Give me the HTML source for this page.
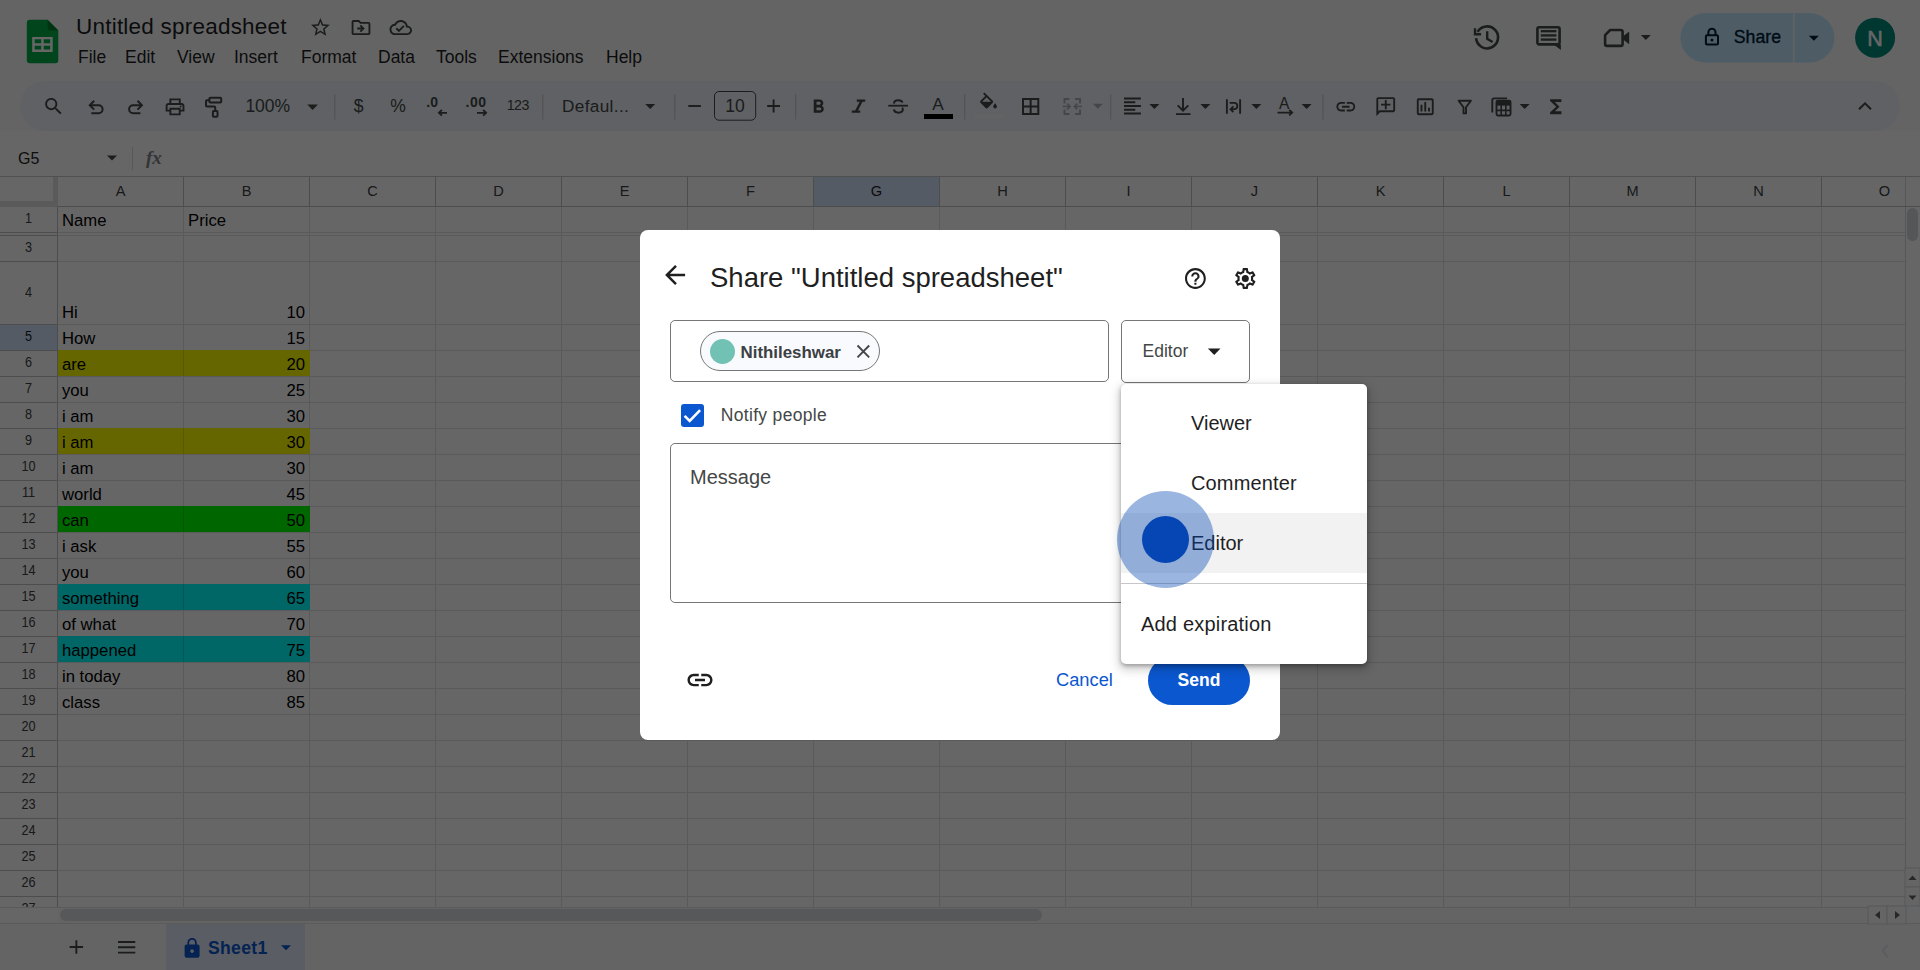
<!DOCTYPE html>
<html lang="en"><head><meta charset="utf-8"><title>Untitled spreadsheet - Google Sheets</title>
<style>
html,body{margin:0;padding:0;}
body{width:1920px;height:970px;overflow:hidden;position:relative;background:#f9fbfd;font-family:"Liberation Sans",sans-serif;}
.b{position:absolute;box-sizing:border-box;display:block;}
.t{position:absolute;white-space:nowrap;line-height:1;font-family:"Liberation Sans",sans-serif;}
#app,#overlay,#modal{position:absolute;left:0;top:0;width:1920px;height:970px;overflow:hidden;}
#overlay{background:rgba(0,0,0,0.6);}
</style></head><body>
<div id="app">
<!-- header -->
<div class="t " style="left:76px;top:16px;font-size:22.5px;color:#1f1f1f;letter-spacing:0.22px;">Untitled spreadsheet</div>
<div class="t " style="left:78px;top:49px;font-size:17.5px;color:#1f1f1f;">File</div>
<div class="t " style="left:125px;top:49px;font-size:17.5px;color:#1f1f1f;">Edit</div>
<div class="t " style="left:177px;top:49px;font-size:17.5px;color:#1f1f1f;">View</div>
<div class="t " style="left:234px;top:49px;font-size:17.5px;color:#1f1f1f;">Insert</div>
<div class="t " style="left:301px;top:49px;font-size:17.5px;color:#1f1f1f;">Format</div>
<div class="t " style="left:378px;top:49px;font-size:17.5px;color:#1f1f1f;">Data</div>
<div class="t " style="left:436px;top:49px;font-size:17.5px;color:#1f1f1f;">Tools</div>
<div class="t " style="left:498px;top:49px;font-size:17.5px;color:#1f1f1f;">Extensions</div>
<div class="t " style="left:606px;top:49px;font-size:17.5px;color:#1f1f1f;">Help</div>
<!-- toolbar -->
<div class="b" style="left:20px;top:81px;width:1880px;height:50px;background:#edf2fa;border-radius:25px;"></div>
<div class="b" style="left:0px;top:131px;width:1920px;height:46px;background:#ffffff;"></div>
<div class="b" style="left:0px;top:176px;width:1920px;height:1px;background:#c7c7c7;"></div>
<div class="t " style="left:18px;top:151px;font-size:16.0px;color:#1f1f1f;">G5</div>
<div class="b" style="left:132px;top:147px;width:1px;height:23px;background:#dadce0;"></div>
<!-- grid -->
<div class="b" style="left:0px;top:177px;width:1905px;height:730px;background:#ffffff;"></div>
<div class="b" style="left:814px;top:177px;width:125px;height:29px;background:#d3e3fd;"></div>
<div class="b" style="left:0px;top:325px;width:57px;height:25px;background:#d3e3fd;"></div>
<div class="b" style="left:0px;top:206px;width:1905px;height:1px;background:#e1e1e1;"></div>
<div class="b" style="left:0px;top:232px;width:1905px;height:1px;background:#e1e1e1;"></div>
<div class="b" style="left:0px;top:235px;width:1905px;height:1px;background:#e1e1e1;"></div>
<div class="b" style="left:0px;top:261px;width:1905px;height:1px;background:#e1e1e1;"></div>
<div class="b" style="left:0px;top:324px;width:1905px;height:1px;background:#e1e1e1;"></div>
<div class="b" style="left:0px;top:350px;width:1905px;height:1px;background:#e1e1e1;"></div>
<div class="b" style="left:0px;top:376px;width:1905px;height:1px;background:#e1e1e1;"></div>
<div class="b" style="left:0px;top:402px;width:1905px;height:1px;background:#e1e1e1;"></div>
<div class="b" style="left:0px;top:428px;width:1905px;height:1px;background:#e1e1e1;"></div>
<div class="b" style="left:0px;top:454px;width:1905px;height:1px;background:#e1e1e1;"></div>
<div class="b" style="left:0px;top:480px;width:1905px;height:1px;background:#e1e1e1;"></div>
<div class="b" style="left:0px;top:506px;width:1905px;height:1px;background:#e1e1e1;"></div>
<div class="b" style="left:0px;top:532px;width:1905px;height:1px;background:#e1e1e1;"></div>
<div class="b" style="left:0px;top:558px;width:1905px;height:1px;background:#e1e1e1;"></div>
<div class="b" style="left:0px;top:584px;width:1905px;height:1px;background:#e1e1e1;"></div>
<div class="b" style="left:0px;top:610px;width:1905px;height:1px;background:#e1e1e1;"></div>
<div class="b" style="left:0px;top:636px;width:1905px;height:1px;background:#e1e1e1;"></div>
<div class="b" style="left:0px;top:662px;width:1905px;height:1px;background:#e1e1e1;"></div>
<div class="b" style="left:0px;top:688px;width:1905px;height:1px;background:#e1e1e1;"></div>
<div class="b" style="left:0px;top:714px;width:1905px;height:1px;background:#e1e1e1;"></div>
<div class="b" style="left:0px;top:740px;width:1905px;height:1px;background:#e1e1e1;"></div>
<div class="b" style="left:0px;top:766px;width:1905px;height:1px;background:#e1e1e1;"></div>
<div class="b" style="left:0px;top:792px;width:1905px;height:1px;background:#e1e1e1;"></div>
<div class="b" style="left:0px;top:818px;width:1905px;height:1px;background:#e1e1e1;"></div>
<div class="b" style="left:0px;top:844px;width:1905px;height:1px;background:#e1e1e1;"></div>
<div class="b" style="left:0px;top:870px;width:1905px;height:1px;background:#e1e1e1;"></div>
<div class="b" style="left:0px;top:896px;width:1905px;height:1px;background:#e1e1e1;"></div>
<div class="b" style="left:0px;top:206px;width:58px;height:1px;background:#c0c0c0;"></div>
<div class="b" style="left:0px;top:232px;width:58px;height:1px;background:#c0c0c0;"></div>
<div class="b" style="left:0px;top:235px;width:58px;height:1px;background:#c0c0c0;"></div>
<div class="b" style="left:0px;top:261px;width:58px;height:1px;background:#c0c0c0;"></div>
<div class="b" style="left:0px;top:324px;width:58px;height:1px;background:#c0c0c0;"></div>
<div class="b" style="left:0px;top:350px;width:58px;height:1px;background:#c0c0c0;"></div>
<div class="b" style="left:0px;top:376px;width:58px;height:1px;background:#c0c0c0;"></div>
<div class="b" style="left:0px;top:402px;width:58px;height:1px;background:#c0c0c0;"></div>
<div class="b" style="left:0px;top:428px;width:58px;height:1px;background:#c0c0c0;"></div>
<div class="b" style="left:0px;top:454px;width:58px;height:1px;background:#c0c0c0;"></div>
<div class="b" style="left:0px;top:480px;width:58px;height:1px;background:#c0c0c0;"></div>
<div class="b" style="left:0px;top:506px;width:58px;height:1px;background:#c0c0c0;"></div>
<div class="b" style="left:0px;top:532px;width:58px;height:1px;background:#c0c0c0;"></div>
<div class="b" style="left:0px;top:558px;width:58px;height:1px;background:#c0c0c0;"></div>
<div class="b" style="left:0px;top:584px;width:58px;height:1px;background:#c0c0c0;"></div>
<div class="b" style="left:0px;top:610px;width:58px;height:1px;background:#c0c0c0;"></div>
<div class="b" style="left:0px;top:636px;width:58px;height:1px;background:#c0c0c0;"></div>
<div class="b" style="left:0px;top:662px;width:58px;height:1px;background:#c0c0c0;"></div>
<div class="b" style="left:0px;top:688px;width:58px;height:1px;background:#c0c0c0;"></div>
<div class="b" style="left:0px;top:714px;width:58px;height:1px;background:#c0c0c0;"></div>
<div class="b" style="left:0px;top:740px;width:58px;height:1px;background:#c0c0c0;"></div>
<div class="b" style="left:0px;top:766px;width:58px;height:1px;background:#c0c0c0;"></div>
<div class="b" style="left:0px;top:792px;width:58px;height:1px;background:#c0c0c0;"></div>
<div class="b" style="left:0px;top:818px;width:58px;height:1px;background:#c0c0c0;"></div>
<div class="b" style="left:0px;top:844px;width:58px;height:1px;background:#c0c0c0;"></div>
<div class="b" style="left:0px;top:870px;width:58px;height:1px;background:#c0c0c0;"></div>
<div class="b" style="left:0px;top:896px;width:58px;height:1px;background:#c0c0c0;"></div>
<div class="b" style="left:0px;top:206px;width:1905px;height:1px;background:#c0c0c0;"></div>
<div class="b" style="left:57px;top:207px;width:1px;height:700px;background:#e1e1e1;"></div>
<div class="b" style="left:57px;top:177px;width:1px;height:30px;background:#c0c0c0;"></div>
<div class="b" style="left:183px;top:207px;width:1px;height:700px;background:#e1e1e1;"></div>
<div class="b" style="left:183px;top:177px;width:1px;height:30px;background:#c0c0c0;"></div>
<div class="b" style="left:309px;top:207px;width:1px;height:700px;background:#e1e1e1;"></div>
<div class="b" style="left:309px;top:177px;width:1px;height:30px;background:#c0c0c0;"></div>
<div class="b" style="left:435px;top:207px;width:1px;height:700px;background:#e1e1e1;"></div>
<div class="b" style="left:435px;top:177px;width:1px;height:30px;background:#c0c0c0;"></div>
<div class="b" style="left:561px;top:207px;width:1px;height:700px;background:#e1e1e1;"></div>
<div class="b" style="left:561px;top:177px;width:1px;height:30px;background:#c0c0c0;"></div>
<div class="b" style="left:687px;top:207px;width:1px;height:700px;background:#e1e1e1;"></div>
<div class="b" style="left:687px;top:177px;width:1px;height:30px;background:#c0c0c0;"></div>
<div class="b" style="left:813px;top:207px;width:1px;height:700px;background:#e1e1e1;"></div>
<div class="b" style="left:813px;top:177px;width:1px;height:30px;background:#c0c0c0;"></div>
<div class="b" style="left:939px;top:207px;width:1px;height:700px;background:#e1e1e1;"></div>
<div class="b" style="left:939px;top:177px;width:1px;height:30px;background:#c0c0c0;"></div>
<div class="b" style="left:1065px;top:207px;width:1px;height:700px;background:#e1e1e1;"></div>
<div class="b" style="left:1065px;top:177px;width:1px;height:30px;background:#c0c0c0;"></div>
<div class="b" style="left:1191px;top:207px;width:1px;height:700px;background:#e1e1e1;"></div>
<div class="b" style="left:1191px;top:177px;width:1px;height:30px;background:#c0c0c0;"></div>
<div class="b" style="left:1317px;top:207px;width:1px;height:700px;background:#e1e1e1;"></div>
<div class="b" style="left:1317px;top:177px;width:1px;height:30px;background:#c0c0c0;"></div>
<div class="b" style="left:1443px;top:207px;width:1px;height:700px;background:#e1e1e1;"></div>
<div class="b" style="left:1443px;top:177px;width:1px;height:30px;background:#c0c0c0;"></div>
<div class="b" style="left:1569px;top:207px;width:1px;height:700px;background:#e1e1e1;"></div>
<div class="b" style="left:1569px;top:177px;width:1px;height:30px;background:#c0c0c0;"></div>
<div class="b" style="left:1695px;top:207px;width:1px;height:700px;background:#e1e1e1;"></div>
<div class="b" style="left:1695px;top:177px;width:1px;height:30px;background:#c0c0c0;"></div>
<div class="b" style="left:1821px;top:207px;width:1px;height:700px;background:#e1e1e1;"></div>
<div class="b" style="left:1821px;top:177px;width:1px;height:30px;background:#c0c0c0;"></div>
<div class="b" style="left:57px;top:207px;width:1px;height:700px;background:#c0c0c0;"></div>
<div class="b" style="left:58px;top:350px;width:252px;height:26px;background:#ffff00;"></div>
<div class="b" style="left:183px;top:350px;width:1px;height:26px;background:rgba(0,0,0,0.13);"></div>
<div class="b" style="left:58px;top:428px;width:252px;height:26px;background:#ffff00;"></div>
<div class="b" style="left:183px;top:428px;width:1px;height:26px;background:rgba(0,0,0,0.13);"></div>
<div class="b" style="left:58px;top:506px;width:252px;height:26px;background:#00ff00;"></div>
<div class="b" style="left:183px;top:506px;width:1px;height:26px;background:rgba(0,0,0,0.13);"></div>
<div class="b" style="left:58px;top:584px;width:252px;height:26px;background:#00ffff;"></div>
<div class="b" style="left:183px;top:584px;width:1px;height:26px;background:rgba(0,0,0,0.13);"></div>
<div class="b" style="left:58px;top:636px;width:252px;height:26px;background:#00ffff;"></div>
<div class="b" style="left:183px;top:636px;width:1px;height:26px;background:rgba(0,0,0,0.13);"></div>
<div class="b" style="left:53px;top:177px;width:5px;height:30px;background:#e0e0e0;"></div>
<div class="b" style="left:0px;top:201px;width:58px;height:6px;background:#e0e0e0;"></div>
<div class="t " style="left:100.5px;top:184px;font-size:14.6px;color:#3c4043;width:40px;text-align:center;">A</div>
<div class="t " style="left:226.5px;top:184px;font-size:14.6px;color:#3c4043;width:40px;text-align:center;">B</div>
<div class="t " style="left:352.5px;top:184px;font-size:14.6px;color:#3c4043;width:40px;text-align:center;">C</div>
<div class="t " style="left:478.5px;top:184px;font-size:14.6px;color:#3c4043;width:40px;text-align:center;">D</div>
<div class="t " style="left:604.5px;top:184px;font-size:14.6px;color:#3c4043;width:40px;text-align:center;">E</div>
<div class="t " style="left:730.5px;top:184px;font-size:14.6px;color:#3c4043;width:40px;text-align:center;">F</div>
<div class="t " style="left:856.5px;top:184px;font-size:14.6px;color:#1f1f1f;width:40px;text-align:center;">G</div>
<div class="t " style="left:982.5px;top:184px;font-size:14.6px;color:#3c4043;width:40px;text-align:center;">H</div>
<div class="t " style="left:1108.5px;top:184px;font-size:14.6px;color:#3c4043;width:40px;text-align:center;">I</div>
<div class="t " style="left:1234.5px;top:184px;font-size:14.6px;color:#3c4043;width:40px;text-align:center;">J</div>
<div class="t " style="left:1360.5px;top:184px;font-size:14.6px;color:#3c4043;width:40px;text-align:center;">K</div>
<div class="t " style="left:1486.5px;top:184px;font-size:14.6px;color:#3c4043;width:40px;text-align:center;">L</div>
<div class="t " style="left:1612.5px;top:184px;font-size:14.6px;color:#3c4043;width:40px;text-align:center;">M</div>
<div class="t " style="left:1738.5px;top:184px;font-size:14.6px;color:#3c4043;width:40px;text-align:center;">N</div>
<div class="t " style="left:1864.5px;top:184px;font-size:14.6px;color:#3c4043;width:40px;text-align:center;">O</div>
<div class="t " style="left:0px;top:211px;font-size:14.4px;color:#3c4043;width:57px;text-align:center;transform:scaleX(0.88);">1</div>
<div class="t " style="left:0px;top:240px;font-size:14.4px;color:#3c4043;width:57px;text-align:center;transform:scaleX(0.88);">3</div>
<div class="t " style="left:0px;top:285px;font-size:14.4px;color:#3c4043;width:57px;text-align:center;transform:scaleX(0.88);">4</div>
<div class="t " style="left:0px;top:329px;font-size:14.4px;color:#1f1f1f;width:57px;text-align:center;transform:scaleX(0.88);">5</div>
<div class="t " style="left:0px;top:355px;font-size:14.4px;color:#3c4043;width:57px;text-align:center;transform:scaleX(0.88);">6</div>
<div class="t " style="left:0px;top:381px;font-size:14.4px;color:#3c4043;width:57px;text-align:center;transform:scaleX(0.88);">7</div>
<div class="t " style="left:0px;top:407px;font-size:14.4px;color:#3c4043;width:57px;text-align:center;transform:scaleX(0.88);">8</div>
<div class="t " style="left:0px;top:433px;font-size:14.4px;color:#3c4043;width:57px;text-align:center;transform:scaleX(0.88);">9</div>
<div class="t " style="left:0px;top:459px;font-size:14.4px;color:#3c4043;width:57px;text-align:center;transform:scaleX(0.88);">10</div>
<div class="t " style="left:0px;top:485px;font-size:14.4px;color:#3c4043;width:57px;text-align:center;transform:scaleX(0.88);">11</div>
<div class="t " style="left:0px;top:511px;font-size:14.4px;color:#3c4043;width:57px;text-align:center;transform:scaleX(0.88);">12</div>
<div class="t " style="left:0px;top:537px;font-size:14.4px;color:#3c4043;width:57px;text-align:center;transform:scaleX(0.88);">13</div>
<div class="t " style="left:0px;top:563px;font-size:14.4px;color:#3c4043;width:57px;text-align:center;transform:scaleX(0.88);">14</div>
<div class="t " style="left:0px;top:589px;font-size:14.4px;color:#3c4043;width:57px;text-align:center;transform:scaleX(0.88);">15</div>
<div class="t " style="left:0px;top:615px;font-size:14.4px;color:#3c4043;width:57px;text-align:center;transform:scaleX(0.88);">16</div>
<div class="t " style="left:0px;top:641px;font-size:14.4px;color:#3c4043;width:57px;text-align:center;transform:scaleX(0.88);">17</div>
<div class="t " style="left:0px;top:667px;font-size:14.4px;color:#3c4043;width:57px;text-align:center;transform:scaleX(0.88);">18</div>
<div class="t " style="left:0px;top:693px;font-size:14.4px;color:#3c4043;width:57px;text-align:center;transform:scaleX(0.88);">19</div>
<div class="t " style="left:0px;top:719px;font-size:14.4px;color:#3c4043;width:57px;text-align:center;transform:scaleX(0.88);">20</div>
<div class="t " style="left:0px;top:745px;font-size:14.4px;color:#3c4043;width:57px;text-align:center;transform:scaleX(0.88);">21</div>
<div class="t " style="left:0px;top:771px;font-size:14.4px;color:#3c4043;width:57px;text-align:center;transform:scaleX(0.88);">22</div>
<div class="t " style="left:0px;top:797px;font-size:14.4px;color:#3c4043;width:57px;text-align:center;transform:scaleX(0.88);">23</div>
<div class="t " style="left:0px;top:823px;font-size:14.4px;color:#3c4043;width:57px;text-align:center;transform:scaleX(0.88);">24</div>
<div class="t " style="left:0px;top:849px;font-size:14.4px;color:#3c4043;width:57px;text-align:center;transform:scaleX(0.88);">25</div>
<div class="t " style="left:0px;top:875px;font-size:14.4px;color:#3c4043;width:57px;text-align:center;transform:scaleX(0.88);">26</div>
<div class="t " style="left:0px;top:901px;font-size:14.4px;color:#3c4043;width:57px;text-align:center;transform:scaleX(0.88);">27</div>
<div class="t " style="left:62px;top:213px;font-size:16.7px;color:#000000;">Name</div>
<div class="t " style="left:188px;top:213px;font-size:16.7px;color:#000000;">Price</div>
<div class="t " style="left:62px;top:305px;font-size:16.7px;color:#000000;">Hi</div>
<div class="t " style="left:184px;top:305px;font-size:16.7px;color:#000000;width:121px;text-align:right;">10</div>
<div class="t " style="left:62px;top:331px;font-size:16.7px;color:#000000;">How</div>
<div class="t " style="left:184px;top:331px;font-size:16.7px;color:#000000;width:121px;text-align:right;">15</div>
<div class="t " style="left:62px;top:357px;font-size:16.7px;color:#000000;">are</div>
<div class="t " style="left:184px;top:357px;font-size:16.7px;color:#000000;width:121px;text-align:right;">20</div>
<div class="t " style="left:62px;top:383px;font-size:16.7px;color:#000000;">you</div>
<div class="t " style="left:184px;top:383px;font-size:16.7px;color:#000000;width:121px;text-align:right;">25</div>
<div class="t " style="left:62px;top:409px;font-size:16.7px;color:#000000;">i am</div>
<div class="t " style="left:184px;top:409px;font-size:16.7px;color:#000000;width:121px;text-align:right;">30</div>
<div class="t " style="left:62px;top:435px;font-size:16.7px;color:#000000;">i am</div>
<div class="t " style="left:184px;top:435px;font-size:16.7px;color:#000000;width:121px;text-align:right;">30</div>
<div class="t " style="left:62px;top:461px;font-size:16.7px;color:#000000;">i am</div>
<div class="t " style="left:184px;top:461px;font-size:16.7px;color:#000000;width:121px;text-align:right;">30</div>
<div class="t " style="left:62px;top:487px;font-size:16.7px;color:#000000;">world</div>
<div class="t " style="left:184px;top:487px;font-size:16.7px;color:#000000;width:121px;text-align:right;">45</div>
<div class="t " style="left:62px;top:513px;font-size:16.7px;color:#000000;">can</div>
<div class="t " style="left:184px;top:513px;font-size:16.7px;color:#000000;width:121px;text-align:right;">50</div>
<div class="t " style="left:62px;top:539px;font-size:16.7px;color:#000000;">i ask</div>
<div class="t " style="left:184px;top:539px;font-size:16.7px;color:#000000;width:121px;text-align:right;">55</div>
<div class="t " style="left:62px;top:565px;font-size:16.7px;color:#000000;">you</div>
<div class="t " style="left:184px;top:565px;font-size:16.7px;color:#000000;width:121px;text-align:right;">60</div>
<div class="t " style="left:62px;top:591px;font-size:16.7px;color:#000000;">something</div>
<div class="t " style="left:184px;top:591px;font-size:16.7px;color:#000000;width:121px;text-align:right;">65</div>
<div class="t " style="left:62px;top:617px;font-size:16.7px;color:#000000;">of what</div>
<div class="t " style="left:184px;top:617px;font-size:16.7px;color:#000000;width:121px;text-align:right;">70</div>
<div class="t " style="left:62px;top:643px;font-size:16.7px;color:#000000;">happened</div>
<div class="t " style="left:184px;top:643px;font-size:16.7px;color:#000000;width:121px;text-align:right;">75</div>
<div class="t " style="left:62px;top:669px;font-size:16.7px;color:#000000;">in today</div>
<div class="t " style="left:184px;top:669px;font-size:16.7px;color:#000000;width:121px;text-align:right;">80</div>
<div class="t " style="left:62px;top:695px;font-size:16.7px;color:#000000;">class</div>
<div class="t " style="left:184px;top:695px;font-size:16.7px;color:#000000;width:121px;text-align:right;">85</div>
<div class="b" style="left:0px;top:907px;width:1920px;height:17px;background:#f9fbfd;"></div>
<div class="b" style="left:0px;top:907px;width:58px;height:17px;background:#ffffff;"></div>
<div class="b" style="left:0px;top:907px;width:1920px;height:1px;background:#e1e1e1;"></div>
<div class="b" style="left:1905px;top:177px;width:15px;height:747px;background:#ffffff;"></div>
<div class="b" style="left:1905px;top:177px;width:1px;height:730px;background:#d9d9d9;"></div>
<div class="b" style="left:1905px;top:206px;width:15px;height:1px;background:#c0c0c0;"></div>
<div class="b" style="left:1907.3px;top:208px;width:11px;height:32.7px;background:#d5d8dc;border-radius:5.5px;"></div>
<div class="b" style="left:60px;top:909px;width:982px;height:12px;background:#dadce0;border-radius:6px;"></div>
<div class="b" style="left:0px;top:924px;width:1920px;height:46px;background:#f9fbfd;"></div>
<div class="b" style="left:0px;top:923px;width:1920px;height:1px;background:#e1e1e1;"></div>
<div class="b" style="left:166px;top:924px;width:139px;height:46px;background:#e1e9f7;"></div>
<div class="t " style="left:208px;top:940px;font-size:17.6px;color:#0b57d0;font-weight:bold;letter-spacing:0.3px;">Sheet1</div>
<svg class="b" style="left:0;top:0" width="1920" height="970" viewBox="0 0 1920 970"><path d="M29.8 19.7H47.6L58.3 30.4V60.2a3 3 0 0 1-3 3H29.8a3 3 0 0 1-3-3V22.7a3 3 0 0 1 3-3z" fill="#00ac47"/>
<path d="M47.6 19.7L58.3 30.4H50.2a2.6 2.6 0 0 1-2.6-2.6z" fill="#00832d"/>
<path d="M32.2 36.9H52.7V52H32.2zM34.7 39.3V43.3H41.2V39.3zM43.7 39.3V43.3H50.2V39.3zM34.7 45.7V49.6H41.2V45.7zM43.7 45.7V49.6H50.2V45.7z" fill="#ffffff" fill-rule="evenodd"/>
<path transform="translate(309.15,16.15) scale(0.93750)" d="M22 9.24l-7.19-.62L12 2 9.19 8.63 2 9.24l5.46 4.73L5.82 21 12 17.27 18.18 21l-1.63-7.03L22 9.24zM12 15.4l-3.76 2.27 1-4.28-3.32-2.88 4.38-.38L12 6.1l1.71 4.04 4.38.38-3.32 2.88 1 4.28L12 15.4z" fill="#444746" />
<path transform="translate(349.75,16.35) scale(0.93750)" d="M20 6h-8l-2-2H4c-1.1 0-2 .9-2 2v12c0 1.1.9 2 2 2h16c1.1 0 2-.9 2-2V8c0-1.1-.9-2-2-2zm0 12H4V6h5.17l2 2H20v10zm-7.84-4H8v-2h4.16l-1.59-1.59L11.99 9 16 13.01 11.99 17l-1.41-1.41L12.16 14z" fill="#444746" />
<path transform="translate(389.55,16.25) scale(0.93750)" d="M19.35 10.04C18.67 6.59 15.64 4 12 4 9.11 4 6.6 5.64 5.35 8.04 2.34 8.36 0 10.91 0 14c0 3.31 2.69 6 6 6h13c2.76 0 5-2.24 5-5 0-2.64-2.05-4.78-4.65-4.96zM19 18H6c-2.21 0-4-1.79-4-4s1.79-4 4-4h.71C7.37 7.69 9.48 6 12 6c3.04 0 5.5 2.46 5.5 5.5v.5H19c1.66 0 3 1.34 3 3s-1.34 3-3 3zm-9-3.82l-2.09-2.09L6.500 13.500 10 17l6.010-6.010-1.410-1.410z" fill="#444746" />
<path d="M1477.6 31.8A11 11 0 1 1 1476.1 38.2" fill="none" stroke="#444746" stroke-width="2.6" stroke-linecap="butt" stroke-linejoin="miter"/>
<path d="M1475 28.2V34.2H1481" fill="none" stroke="#444746" stroke-width="2.4" stroke-linecap="butt" stroke-linejoin="miter"/>
<path d="M1487.2 31.2V38.8L1492.6 42" fill="none" stroke="#444746" stroke-width="2.4" stroke-linecap="butt" stroke-linejoin="miter"/>
<path d="M1539 27.3H1558a1.6 1.6 0 0 1 1.6 1.6V42.8a1.6 1.6 0 0 1-1.6 1.6H1539a1.6 1.6 0 0 1-1.6-1.6V28.9a1.6 1.6 0 0 1 1.6-1.6z" fill="none" stroke="#444746" stroke-width="2.6" stroke-linecap="butt" stroke-linejoin="miter"/>
<path d="M1553.6 44.4H1560.9V50z" fill="#444746"/>
<path d="M1540.8 31.2H1556.4" fill="none" stroke="#444746" stroke-width="2.3" stroke-linecap="butt" stroke-linejoin="miter"/>
<path d="M1540.8 35.4H1556.4" fill="none" stroke="#444746" stroke-width="2.3" stroke-linecap="butt" stroke-linejoin="miter"/>
<path d="M1540.8 39.6H1556.4" fill="none" stroke="#444746" stroke-width="2.3" stroke-linecap="butt" stroke-linejoin="miter"/>
<path d="M1610.2 30H1620.6a2 2 0 0 1 2 2V43.9a2 2 0 0 1-2 2H1607.1a2 2 0 0 1-2-2V35.1z" fill="none" stroke="#444746" stroke-width="2.6" stroke-linejoin="round"/>
<path d="M1622.8 36.6L1629.2 31.6V44.2L1622.8 39.2z" fill="#444746"/>
<path d="M1640.8 35.1h10l-5.0 5z" fill="#444746"/>
<rect x="1680.4" y="13" width="154" height="49.4" rx="24.7" fill="#c2e7ff"/>
<rect x="1793.2" y="13" width="1.2" height="49.4" fill="#f9fbfd"/>
<path d="M1706.9 35.3H1717a1 1 0 0 1 1 1V43.6a1 1 0 0 1-1 1H1706.9a1 1 0 0 1-1-1V36.300a1 1 0 0 1 1-1z" fill="none" stroke="#001d35" stroke-width="2" stroke-linecap="butt" stroke-linejoin="miter"/>
<path d="M1708.4 35.300V32.200a3.550 3.550 0 0 1 7.100 0V35.300" fill="none" stroke="#001d35" stroke-width="2" stroke-linecap="butt" stroke-linejoin="miter"/>
<circle cx="1711.95" cy="40" r="1.5" fill="#001d35"/>
<path d="M1808.9 35.7h10l-5.0 5z" fill="#001d35"/>
<circle cx="1875.1" cy="37.7" r="20" fill="#00897b"/>
<path transform="translate(42.35,95.15) scale(0.93750)" d="M15.5 14h-.79l-.28-.27C15.41 12.59 16 11.11 16 9.5 16 5.91 13.09 3 9.5 3S3 5.91 3 9.5 5.91 16 9.5 16c1.61 0 3.09-.59 4.23-1.57l.27.28v.79l5 4.99L20.49 19l-4.990-5zm-6 0C7.010 14 5 11.990 5 9.500S7.010 5 9.500 5 14 7.010 14 9.500 11.990 14 9.500 14z" fill="#444746" />
<path d="M91.3 113.2H98.6a4 4 0 0 0 0-8H90.5" fill="none" stroke="#444746" stroke-width="2" stroke-linecap="butt" stroke-linejoin="miter"/>
<path d="M94.2 100.8L89.8 105.200L94.2 109.600" fill="none" stroke="#444746" stroke-width="2" stroke-linecap="butt" stroke-linejoin="miter"/>
<path d="M140.4 113.2H133.1a4 4 0 0 1 0-8H141.200" fill="none" stroke="#444746" stroke-width="2" stroke-linecap="butt" stroke-linejoin="miter"/>
<path d="M137.500 100.800L141.900 105.200L137.500 109.600" fill="none" stroke="#444746" stroke-width="2" stroke-linecap="butt" stroke-linejoin="miter"/>
<path transform="translate(163.80,95.60) scale(0.93750)" d="M19 8h-1V3H6v5H5c-1.66 0-3 1.34-3 3v6h4v4h12v-4h4v-6c0-1.66-1.34-3-3-3zM8 5h8v3H8V5zm8 12v2H8v-4h8v2zm2-2v-2H6v2H4v-4c0-.55.45-1 1-1h14c.55 0 1 .45 1 1v4h-2z" fill="#444746" />
<circle cx="180.68" cy="106.38" r="0.95" fill="#444746"/>
<path d="M210.4 97.8H220.2a1 1 0 0 1 1 1V101.600a1 1 0 0 1-1 1H210.400a1 1 0 0 1-1-1V98.800a1 1 0 0 1 1-1z" fill="none" stroke="#444746" stroke-width="2" stroke-linecap="butt" stroke-linejoin="miter"/>
<path d="M209.4 100.200H207a1 1 0 0 0-1 1V105.600a1 1 0 0 0 1 1H214.200a1 1 0 0 1 1 1V111" fill="none" stroke="#444746" stroke-width="2" stroke-linecap="butt" stroke-linejoin="miter"/>
<path d="M213.7 111H216.700a.8.800 0 0 1 .8.800V116a.8.800 0 0 1-.8.800H213.700a.8.800 0 0 1-.8-.8V111.800a.8.800 0 0 1 .8-.8z" fill="none" stroke="#444746" stroke-width="2" stroke-linecap="butt" stroke-linejoin="miter"/>
<path d="M307.3 104.5h10.6l-5.3 5.4z" fill="#444746"/>
<rect x="334.3" y="94" width="1" height="25.5" fill="#c7c7c7"/>
<path d="M447 112.800H439.200M441.900 109.900L438.900 112.800L441.900 115.700" fill="none" stroke="#444746" stroke-width="1.8" stroke-linecap="butt" stroke-linejoin="miter"/>
<path d="M477 112.800H485.800M483.100 109.900L486.100 112.800L483.100 115.700" fill="none" stroke="#444746" stroke-width="1.8" stroke-linecap="butt" stroke-linejoin="miter"/>
<rect x="542.3" y="94" width="1" height="25.5" fill="#c7c7c7"/>
<path d="M645.2 103.9h10l-5.0 5z" fill="#444746"/>
<rect x="674.3" y="94" width="1" height="25.5" fill="#c7c7c7"/>
<path d="M688.3 106H700.9" fill="none" stroke="#444746" stroke-width="1.9" stroke-linecap="butt" stroke-linejoin="miter"/>
<rect x="714.5" y="91.500" width="41.200" height="28.700" rx="4.500" fill="none" stroke="#444746" stroke-width="1"/>
<path d="M767.2 106H780M773.600 99.600V112.400" fill="none" stroke="#444746" stroke-width="1.9" stroke-linecap="butt" stroke-linejoin="miter"/>
<rect x="795.2" y="94" width="1" height="25.5" fill="#c7c7c7"/>
<path transform="translate(807.15,95.75) scale(0.93750)" d="M15.6 10.79c.97-.67 1.65-1.77 1.65-2.79 0-2.26-1.75-4-4-4H7v14h7.04c2.09 0 3.71-1.7 3.71-3.79 0-1.52-.86-2.82-2.15-3.42zM10 6.5h3c.83 0 1.5.67 1.5 1.5s-.67 1.5-1.5 1.5h-3v-3zm3.5 9H10v-3h3.500c.830 0 1.500.670 1.500 1.500s-.670 1.500-1.500 1.500z" fill="#444746" />
<path d="M856.800 100.600H865.200M851.800 111.600H860.200" fill="none" stroke="#444746" stroke-width="2.1" stroke-linecap="butt" stroke-linejoin="miter"/>
<path d="M861.700 100.600L856 111.600" fill="none" stroke="#444746" stroke-width="2.4" stroke-linecap="butt" stroke-linejoin="miter"/>
<path d="M888.3 105.700H908" fill="none" stroke="#444746" stroke-width="1.8" stroke-linecap="butt" stroke-linejoin="miter"/>
<path d="M894.100 103.600C893.700 101.500 895.600 100.200 898.300 100.200C900.500 100.200 902 101 902.600 102.500" fill="none" stroke="#444746" stroke-width="2" stroke-linecap="butt"/>
<path d="M893.800 109.600C894.300 111.600 896 112.700 898.400 112.700C901 112.700 902.800 111.500 902.800 109.600C902.800 108.900 902.600 108.300 902.100 107.800" fill="none" stroke="#444746" stroke-width="2" stroke-linecap="butt" stroke-linejoin="miter"/>
<rect x="924" y="114" width="29" height="5" fill="#000000"/>
<rect x="964.2" y="94" width="1" height="25.5" fill="#c7c7c7"/>
<path transform="translate(977.25,92.45) scale(0.93750)" d="M16.56 8.94L7.62 0 6.21 1.41l2.38 2.38-5.15 5.15c-.59.59-.59 1.54 0 2.12l5.5 5.5c.29.29.68.44 1.06.44s.77-.15 1.06-.44l5.5-5.5c.59-.58.59-1.53 0-2.12zM5.21 10L10 5.21 14.79 10H5.21zM19 11.500s-2 2.170-2 3.500c0 1.100.900 2 2 2s2-.900 2-2c0-1.330-2-3.500-2-3.500z" fill="#444746" />
<rect x="975" y="114" width="28.400" height="5" fill="#f6f8fb"/>
<path d="M1023 99.100H1038.300V114H1023zM1030.650 99.100V114M1023 106.550H1038.300" fill="none" stroke="#444746" stroke-width="2" stroke-linecap="butt" stroke-linejoin="miter"/>
<g opacity="0.38">
<path d="M1069.500 98.900H1064.500V103.400M1064.500 109.600V114.100H1069.500M1075 98.900H1080V103.400M1080 109.600V114.100H1075" fill="none" stroke="#444746" stroke-width="2" stroke-linecap="butt" stroke-linejoin="miter"/>
<path d="M1062.500 106.500H1069.500M1067.200 103.700L1070 106.500L1067.200 109.300M1082 106.500H1075M1077.300 103.700L1074.500 106.500L1077.300 109.300" fill="none" stroke="#444746" stroke-width="1.7" stroke-linecap="butt" stroke-linejoin="miter"/>
<path d="M1092.9 103.8h10l-5.0 5z" fill="#444746"/>
</g>
<rect x="1110.2" y="94" width="1" height="25.5" fill="#c7c7c7"/>
<path transform="translate(1121.20,94.75) scale(0.93750)" d="M15 15H3v2h12v-2zm0-8H3v2h12V7zM3 13h18v-2H3v2zm0 8h18v-2H3v2zM3 3v2h18V3H3z" fill="#444746" />
<path d="M1149.4 103.9h10l-5.0 5z" fill="#444746"/>
<path d="M1183 98.100V110.300M1177.700 105.400L1183 110.700L1188.300 105.400M1176 114.100H1190.500" fill="none" stroke="#444746" stroke-width="1.9" stroke-linecap="butt" stroke-linejoin="miter"/>
<path d="M1200.4 103.9h10l-5.0 5z" fill="#444746"/>
<path d="M1226.900 99.200V113.800M1240.100 99.200V113.800" fill="none" stroke="#444746" stroke-width="1.9" stroke-linecap="butt" stroke-linejoin="miter"/>
<path d="M1229.600 102.900H1234.200a3.150 3.150 0 0 1 0 6.300H1230.600M1233.400 106.400L1230.500 109.200L1233.400 112" fill="none" stroke="#444746" stroke-width="1.8" stroke-linecap="butt" stroke-linejoin="miter"/>
<path d="M1251.4 103.9h10l-5.0 5z" fill="#444746"/>
<path d="M1277.500 112.600H1291.800M1289.200 109.800L1292.200 112.600L1289.200 115.400" fill="none" stroke="#444746" stroke-width="1.8" stroke-linecap="butt" stroke-linejoin="miter"/>
<path d="M1301.6 103.9h10l-5.0 5z" fill="#444746"/>
<rect x="1322.5" y="94" width="1" height="25.5" fill="#c7c7c7"/>
<path transform="translate(1334.55,95.45) scale(0.93750)" d="M3.9 12c0-1.71 1.39-3.1 3.1-3.1h4V7H7c-2.76 0-5 2.24-5 5s2.24 5 5 5h4v-1.9H7c-1.71 0-3.1-1.39-3.1-3.1zM8 13h8v-2H8v2zm9-6h-4v1.900h4c1.710 0 3.100 1.390 3.100 3.100s-1.390 3.100-3.100 3.100h-4V17h4c2.760 0 5-2.240 5-5s-2.240-5-5-5z" fill="#444746" />
<path transform="translate(1397.00,95.25) scale(-0.93750,0.93750)" d="M22 4c0-1.1-.9-2-2-2H4c-1.1 0-2 .9-2 2v12c0 1.100.900 2 2 2h14l4 4V4zm-2 13.170L18.830 16H4V4h16v13.170zM13 5h-2v4H7v2h4v4h2v-4h4V9h-4z" fill="#444746" />
<path transform="translate(1414.00,95.45) scale(0.93750)" d="M9 17H7v-7h2v7zm4 0h-2V7h2v10zm4 0h-2v-4h2v4zm2 2H5V5h14v14zm0-16H5c-1.100 0-2 .900-2 2v14c0 1.100.900 2 2 2h14c1.100 0 2-.900 2-2V5c0-1.100-.900-2-2-2z" fill="#444746" />
<path d="M1458.600 100.700H1470.900L1466 107.300V113.400H1463.500V107.300z" fill="none" stroke="#444746" stroke-width="1.9" stroke-linejoin="round"/>
<path d="M1492.300 112.500V100.200a1.800 1.800 0 0 1 1.800-1.800H1507" fill="none" stroke="#444746" stroke-width="1.9" stroke-linecap="butt" stroke-linejoin="miter"/>
<path d="M1498 100.600H1509a1.500 1.500 0 0 1 1.500 1.500V114a1.500 1.500 0 0 1-1.500 1.500H1498a1.500 1.500 0 0 1-1.500-1.500V102.100a1.500 1.500 0 0 1 1.500-1.500z" fill="none" stroke="#444746" stroke-width="1.9" stroke-linecap="butt" stroke-linejoin="miter"/>
<rect x="1496.500" y="100.600" width="14" height="5" fill="#444746"/>
<path d="M1501.200 105V115.500M1505.800 105V115.500M1496.500 110.400H1510.500" fill="none" stroke="#444746" stroke-width="1.6" stroke-linecap="butt" stroke-linejoin="miter"/>
<path d="M1519.6 103.9h10l-5.0 5z" fill="#444746"/>
<path transform="translate(1544.50,95.40) scale(0.93750)" d="M18 4H6v2l6.500 6L6 18v2h12v-3h-7l5-5-5-5h7z" fill="#444746" />
<path d="M1859 109.300L1865 103.300L1871 109.300" fill="none" stroke="#444746" stroke-width="2" stroke-linecap="butt" stroke-linejoin="miter"/>
<path d="M107.0 155.5h10l-5.0 5z" fill="#444746"/>
<path d="M69.600 947H83.100M76.350 940.250V953.750" fill="none" stroke="#444746" stroke-width="1.9" stroke-linecap="butt" stroke-linejoin="miter"/>
<path d="M118 942H135.300M118 947.300H135.300M118 952.600H135.300" fill="none" stroke="#444746" stroke-width="1.9" stroke-linecap="butt" stroke-linejoin="miter"/>
<path transform="translate(180.85,937.05) scale(0.93750)" d="M18 8h-1V6c0-2.760-2.240-5-5-5S7 3.240 7 6v2H6c-1.100 0-2 .900-2 2v10c0 1.100.900 2 2 2h12c1.100 0 2-.900 2-2V10c0-1.100-.900-2-2-2zm-6 9c-1.100 0-2-.900-2-2s.900-2 2-2 2 .900 2 2-.900 2-2 2zm3.100-9H8.900V6c0-1.710 1.390-3.100 3.100-3.100 1.710 0 3.100 1.390 3.100 3.100v2z" fill="#0b57d0" />
<path d="M281.0 945.3h10l-5.0 5z" fill="#0b57d0"/>
<path d="M1887.500 945L1882.500 951L1887.500 957" fill="none" stroke="#e4e7ee" stroke-width="2" stroke-linecap="butt" stroke-linejoin="miter"/>
<rect x="1868" y="906" width="19" height="18" fill="#fdfdfd" stroke="#dadce0" stroke-width="1"/>
<rect x="1887" y="906" width="19" height="18" fill="#fdfdfd" stroke="#dadce0" stroke-width="1"/>
<path d="M1880 911L1875 915L1880 919z" fill="#5f6368"/>
<path d="M1895 911L1900 915L1895 919z" fill="#5f6368"/>
<rect x="1905" y="868" width="15" height="19" fill="#fdfdfd" stroke="#dadce0" stroke-width="1"/>
<rect x="1905" y="887" width="15" height="19" fill="#fdfdfd" stroke="#dadce0" stroke-width="1"/>
<path d="M1908.500 880L1912.500 875.500L1916.500 880z" fill="#5f6368"/>
<path d="M1908.500 895.500L1912.500 900L1916.500 895.500z" fill="#5f6368"/></svg>
<div class="t " style="left:245.4px;top:98px;font-size:17.5px;color:#444746;">100%</div>
<div class="t " style="left:338.5px;top:98px;font-size:17.5px;color:#444746;width:40px;text-align:center;">$</div>
<div class="t " style="left:378px;top:98px;font-size:17.5px;color:#444746;width:40px;text-align:center;">%</div>
<div class="t " style="left:426.3px;top:95px;font-size:14.0px;color:#444746;font-weight:bold;">.0</div>
<div class="t " style="left:465.5px;top:95px;font-size:14.0px;color:#444746;font-weight:bold;letter-spacing:0.5px;">.00</div>
<div class="t " style="left:506.7px;top:98px;font-size:14.2px;color:#444746;letter-spacing:-0.5px;">123</div>
<div class="t " style="left:562px;top:98px;font-size:17.2px;color:#444746;letter-spacing:0.35px;">Defaul...</div>
<div class="t " style="left:715px;top:98px;font-size:17.5px;color:#444746;width:40px;text-align:center;">10</div>
<div class="t " style="left:918px;top:96px;font-size:17.2px;color:#444746;width:40px;text-align:center;">A</div>
<div class="t " style="left:1264.3px;top:96px;font-size:15.6px;color:#444746;width:40px;text-align:center;">A</div>
<div class="t " style="left:1733.8px;top:29px;font-size:17.7px;color:#001d35;-webkit-text-stroke:0.35px #001d35;">Share</div>
<div class="t " style="left:1855.1px;top:29px;font-size:21.5px;color:#ffffff;width:40px;text-align:center;-webkit-text-stroke:0.5px #fff;">N</div>
<div class="t " style="left:146px;top:148px;font-size:19.0px;color:#80868b;font-style:italic;font-weight:bold;font-family:Liberation Serif,serif;">fx</div>
</div>
<div id="overlay"></div>
<div id="modal">
<div class="b" style="left:640px;top:230px;width:640px;height:510px;background:#ffffff;border-radius:8px;"></div>
<div class="t " style="left:710px;top:264px;font-size:27.5px;color:#1f1f1f;">Share "Untitled spreadsheet"</div>
<div class="b" style="left:670px;top:320px;width:439px;height:62px;border:1px solid #747775;border-radius:5px;"></div>
<div class="b" style="left:700px;top:331px;width:180px;height:40px;background:#f8fafd;border:1px solid #747775;border-radius:20px;"></div>
<div class="b" style="left:710px;top:338.75px;width:25px;height:25px;background:#71c1b5;border-radius:50%;"></div>
<div class="t " style="left:740.5px;top:345px;font-size:16.9px;color:#3c4043;font-weight:bold;">Nithileshwar</div>
<div class="b" style="left:1121px;top:320px;width:129px;height:63px;border:1px solid #747775;border-radius:5px;"></div>
<div class="t " style="left:1142.5px;top:343px;font-size:17.5px;color:#444746;">Editor</div>
<div class="b" style="left:681px;top:404px;width:22.5px;height:22.5px;background:#0b57d0;border-radius:3px;"></div>
<div class="t " style="left:720.7px;top:407px;font-size:17.5px;color:#444746;letter-spacing:0.33px;">Notify people</div>
<div class="b" style="left:670px;top:443px;width:480px;height:160px;border:1px solid #747775;border-radius:5px;"></div>
<div class="t " style="left:690px;top:467px;font-size:20.0px;color:#444746;">Message</div>
<div class="t " style="left:1056px;top:671px;font-size:18.3px;color:#0b57d0;">Cancel</div>
<div class="b" style="left:1148px;top:656px;width:102px;height:49px;background:#0b57d0;border-radius:24.5px;"></div>
<div class="t " style="left:1148px;top:672px;font-size:17.5px;color:#ffffff;font-weight:bold;width:102px;text-align:center;">Send</div>
<div class="b" style="left:1121px;top:383.5px;width:246px;height:280.5px;background:#ffffff;border-radius:5px;box-shadow:0 2px 4px rgba(0,0,0,0.3),0 4px 10px 3px rgba(0,0,0,0.15);"></div>
<div class="b" style="left:1121px;top:513px;width:246px;height:60px;background:#f2f2f2;"></div>
<div class="b" style="left:1121px;top:583px;width:246px;height:1px;background:#c7c7c7;"></div>
<div class="t " style="left:1191px;top:413px;font-size:20.0px;color:#1f1f1f;">Viewer</div>
<div class="t " style="left:1191px;top:473px;font-size:20.0px;color:#1f1f1f;letter-spacing:0.15px;">Commenter</div>
<div class="t " style="left:1191px;top:533px;font-size:20.0px;color:#1f1f1f;">Editor</div>
<div class="t " style="left:1141px;top:614px;font-size:20.0px;color:#1f1f1f;letter-spacing:0.2px;">Add expiration</div>
<div class="b" style="left:1117px;top:491px;width:97px;height:97px;background:rgba(5,70,180,0.4);border-radius:50%;"></div>
<div class="b" style="left:1142px;top:516px;width:47px;height:47px;background:#0546b4;border-radius:50%;"></div>
<svg class="b" style="left:0;top:0" width="1920" height="970" viewBox="0 0 1920 970"><path transform="translate(660.10,259.90) scale(1.25000)" d="M20 11H7.83l5.59-5.59L12 4l-8 8 8 8 1.41-1.41L7.83 13H20v-2z" fill="#1f1f1f" />
<path transform="translate(1182.90,266.00) scale(1.04167)" d="M11 18h2v-2h-2v2zm1-16C6.48 2 2 6.48 2 12s4.48 10 10 10 10-4.48 10-10S17.52 2 12 2zm0 18c-4.41 0-8-3.59-8-8s3.59-8 8-8 8 3.59 8 8-3.59 8-8 8zm0-14c-2.21 0-4 1.79-4 4h2c0-1.1.9-2 2-2s2 .9 2 2c0 2-3 1.75-3 5h2c0-2.25 3-2.5 3-5 0-2.21-1.79-4-4-4z" fill="#1f1f1f" />
<path transform="translate(1232.80,266.00) scale(1.04167)" d="M19.43 12.98c.04-.32.07-.64.07-.98 0-.34-.03-.66-.07-.98l2.11-1.65c.19-.15.24-.42.12-.64l-2-3.46c-.09-.16-.26-.25-.44-.25-.06 0-.12.01-.17.03l-2.49 1c-.52-.4-1.08-.73-1.69-.98l-.38-2.65C14.46 2.18 14.25 2 14 2h-4c-.25 0-.46.18-.49.42l-.38 2.65c-.61.25-1.17.59-1.69.98l-2.49-1c-.06-.02-.12-.03-.18-.03-.17 0-.34.09-.43.25l-2 3.46c-.13.22-.07.49.12.64l2.11 1.65c-.04.32-.07.65-.07.98 0 .33.03.66.07.98l-2.11 1.65c-.19.15-.24.42-.12.64l2 3.46c.09.16.26.25.44.25.06 0 .12-.01.17-.03l2.49-1c.52.4 1.08.73 1.69.98l.38 2.65c.03.24.24.42.49.42h4c.25 0 .46-.18.49-.42l.38-2.65c.61-.25 1.17-.59 1.69-.98l2.49 1c.06.02.12.03.18.03.17 0 .34-.09.43-.25l2-3.46c.12-.22.07-.49-.12-.64l-2.11-1.65zm-1.980-1.710c.040.310.050.520.050.730 0 .210-.020.430-.050.730l-.140 1.130.890.700 1.080.840-.700 1.210-1.270-.510-1.040-.420-.900.680c-.430.320-.840.560-1.250.730l-1.060.430-.160 1.130-.200 1.350h-1.400l-.190-1.350-.160-1.130-1.060-.430c-.430-.180-.830-.410-1.230-.710l-.910-.700-1.060.430-1.270.510-.700-1.210 1.080-.840.890-.700-.140-1.130c-.030-.310-.050-.540-.050-.740s.020-.430.050-.730l.140-1.130-.890-.700-1.080-.840.700-1.210 1.270.510 1.040.420.900-.680c.430-.320.840-.560 1.250-.730l1.060-.430.160-1.130.200-1.350h1.390l.190 1.350.160 1.130 1.060.430c.430.180.830.410 1.230.710l.910.700 1.060-.430 1.270-.510.700 1.210-1.070.850-.890.700.140 1.130z" fill="#1f1f1f" />
<circle cx="1245.3" cy="278.5" r="3.500" fill="#1f1f1f"/>
<path d="M857.500 345.500L869.200 357.300M869.200 345.500L857.500 357.300" fill="none" stroke="#444746" stroke-width="1.9" />
<path d="M1207.900 348.400H1220.500L1214.200 354.900z" fill="#1f1f1f"/>
<path d="M684.600 415.800L689.700 420.900L700.100 410.200" fill="none" stroke="#ffffff" stroke-width="2.6" />
<path transform="translate(685.00,665.00) scale(1.25000)" d="M3.9 12c0-1.71 1.39-3.1 3.1-3.1h4V7H7c-2.76 0-5 2.24-5 5s2.24 5 5 5h4v-1.900H7c-1.710 0-3.100-1.390-3.100-3.100zM8 13h8v-2H8v2zm9-6h-4v1.900h4c1.710 0 3.100 1.390 3.100 3.100s-1.390 3.100-3.100 3.100h-4V17h4c2.760 0 5-2.240 5-5s-2.240-5-5-5z" fill="#1f1f1f" /></svg>
</div>
</body></html>
